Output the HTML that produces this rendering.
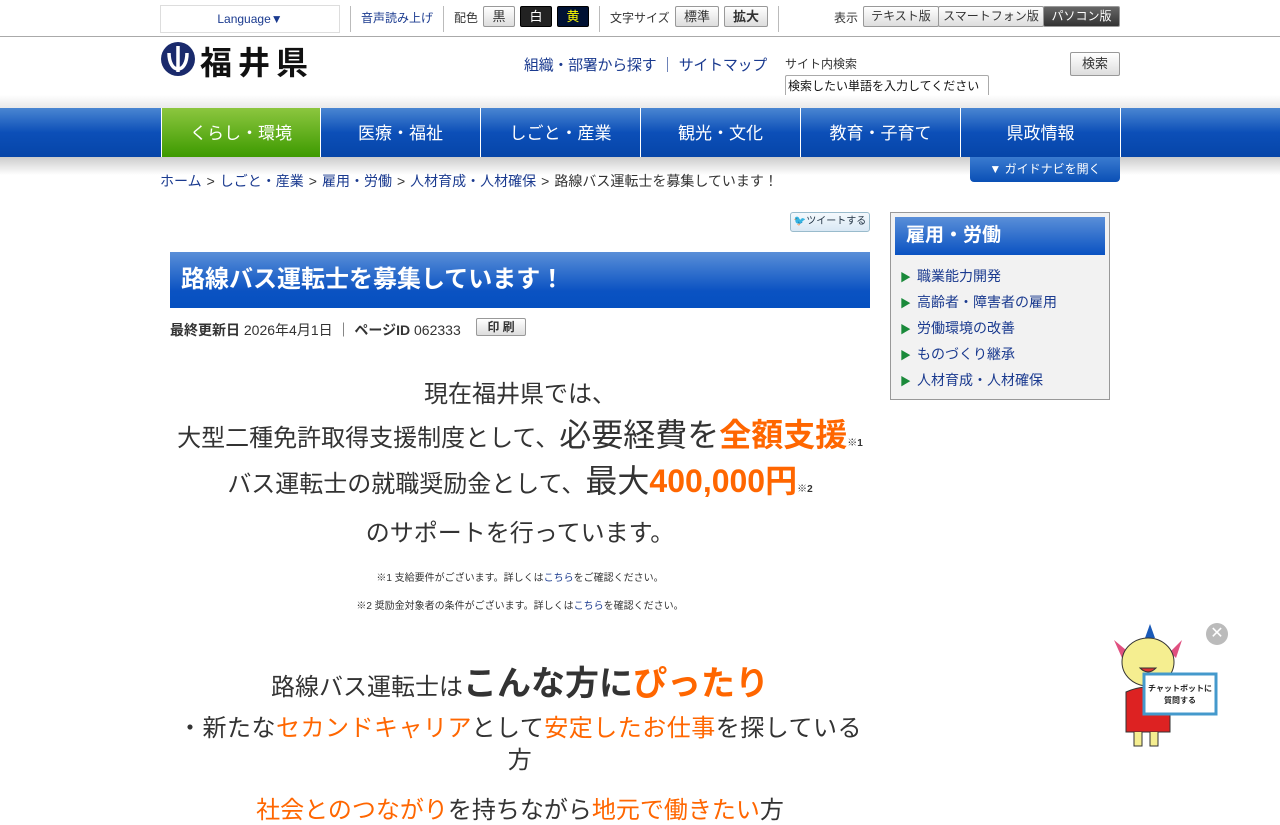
<!DOCTYPE html>
<html><head><meta charset="utf-8"><style>
*{margin:0;padding:0;box-sizing:border-box}
body{width:1280px;height:800px;overflow:hidden;background:#fff;font-family:"Liberation Sans","Noto Sans CJK JP",sans-serif;color:#333;position:relative}
.a{position:absolute}
.btn{position:absolute;border:1px solid #999;border-radius:2px;background:linear-gradient(#fff,#ddd);font-size:13px;text-align:center;line-height:19px;height:21px;color:#333}
.sep{position:absolute;top:6px;width:1px;height:26px;background:#bbb}
.nav{position:absolute;top:108px;height:49px;width:160px;color:#fff;font-size:17px;text-align:center;line-height:52px;border-right:1px solid #fff}
.c{position:absolute;left:170px;width:700px;text-align:center;white-space:nowrap}
.o{color:#f60}
.g{color:#333;margin:0 5px}
.side li{list-style:none;font-size:14px;color:#1a3a8f;height:26px;line-height:26px;padding-left:9px}
.side li:before{content:"▶";color:#1a8a3a;font-size:11px;margin-right:6px}
</style></head><body>
<div class="a" style="left:0;top:36px;width:1280px;height:1px;background:#aaa"></div>
<div class="a" style="left:160px;top:5px;width:180px;height:28px;border:1px solid #ddd;font-size:12px;color:#1a3a8f;text-align:center;line-height:26px">Language▼</div>
<div class="sep" style="left:350px"></div><div class="sep" style="left:443px"></div><div class="sep" style="left:599px"></div><div class="sep" style="left:778px"></div>
<div class="a" style="left:361px;top:9px;font-size:12px;color:#1a3a8f">音声読み上げ</div>
<div class="a" style="left:454px;top:9px;font-size:12px">配色</div>
<div class="btn" style="left:483px;top:6px;width:32px">黒</div>
<div class="btn" style="left:520px;top:6px;width:32px;background:#222;color:#fff;border-color:#000">白</div>
<div class="btn" style="left:557px;top:6px;width:32px;background:#013;color:#ff0;border-color:#000">黄</div>
<div class="a" style="left:610px;top:9px;font-size:12px">文字サイズ</div>
<div class="btn" style="left:675px;top:6px;width:44px">標準</div>
<div class="btn" style="left:724px;top:6px;width:44px;font-weight:bold">拡大</div>
<div class="a" style="left:834px;top:9px;font-size:12px">表示</div>
<div class="btn" style="left:863px;top:6px;width:76px;font-size:12px">テキスト版</div>
<div class="btn" style="left:938px;top:6px;width:106px;font-size:12px">スマートフォン版</div>
<div class="btn" style="left:1043px;top:6px;width:77px;font-size:12px;background:linear-gradient(#666,#333);color:#fff">パソコン版</div>
<svg class="a" style="left:160px;top:41px" width="36" height="36" viewBox="0 0 36 36"><circle cx="18" cy="18" r="17" fill="#1a2a6c"/><path d="M18 5v26M9 12c0 10 4 16 9 16s9-6 9-16" stroke="#fff" stroke-width="3.5" fill="none"/></svg>
<div class="a" style="left:200px;top:38px;font-size:32px;font-weight:bold;color:#111;letter-spacing:6px">福井県</div>
<div class="a" style="left:524px;top:54px;font-size:15px;color:#1a3a8f;letter-spacing:-0.3px">組織・部署から探す ｜ サイトマップ</div>
<div class="a" style="left:785px;top:55px;font-size:12px">サイト内検索</div>
<div class="a" style="left:785px;top:75px;width:204px;height:22px;border:1px solid #aaa;border-radius:2px;font-size:12px;line-height:20px;padding-left:2px;color:#111;white-space:nowrap;overflow:hidden">検索したい単語を入力してください</div>
<div class="btn" style="left:1070px;top:52px;width:50px;height:24px;line-height:22px;font-size:13px">検索</div>
<div class="a" style="left:0;top:95px;width:1280px;height:20px;background:linear-gradient(#fff,#ddd)"></div>
<div class="a" style="left:0;top:108px;width:1280px;height:49px;background:linear-gradient(#4a86d2,#0c4fb8 50%,#0645a8)"></div>
<div class="a" style="left:0;top:157px;width:1280px;height:18px;background:linear-gradient(#ccc,#fff)"></div>
<div class="nav" style="left:161px;background:linear-gradient(#8cc63f,#3d9a00);border-left:1px solid #fff">くらし・環境</div>
<div class="nav" style="left:321px">医療・福祉</div>
<div class="nav" style="left:481px">しごと・産業</div>
<div class="nav" style="left:641px">観光・文化</div>
<div class="nav" style="left:801px">教育・子育て</div>
<div class="nav" style="left:961px">県政情報</div>
<div class="a" style="left:970px;top:157px;width:150px;height:25px;background:linear-gradient(#3a7bd0,#0a4fb5);border-radius:0 0 4px 4px;color:#fff;font-size:12px;line-height:24px;text-align:center">▼ ガイドナビを開く</div>
<div class="a" style="left:160px;top:171px;font-size:14px;color:#1a3a8f;white-space:nowrap">ホーム<span class="g">&gt;</span>しごと・産業<span class="g">&gt;</span>雇用・労働<span class="g">&gt;</span>人材育成・人材確保<span class="g">&gt;</span><span style="color:#333">路線バス運転士を募集しています！</span></div>
<div class="a" style="left:790px;top:212px;width:80px;height:20px;border:1px solid #9bc;border-radius:3px;background:linear-gradient(#f4f9fd,#d9e8f4);font-size:10px;line-height:18px;text-align:center;color:#234"><span style="color:#39f">🐦</span>ツイートする</div>
<div class="a" style="left:170px;top:252px;width:700px;height:56px;background:linear-gradient(#5a8fd8,#0a52c2 70%,#0550c0);color:#fff;font-size:24px;font-weight:bold;line-height:56px;padding-left:11px">路線バス運転士を募集しています！</div>
<div class="a" style="left:170px;top:320px;font-size:14px"><b>最終更新日</b> 2026年4月1日 ｜ <b>ページID</b> 062333</div>
<div class="btn" style="left:476px;top:318px;width:50px;height:18px;line-height:16px;font-size:12px;font-weight:bold">印 刷</div>
<div class="c" style="top:374px;font-size:24px">現在福井県では、</div>
<div class="c" style="top:415px;font-size:24px;line-height:40px">大型二種免許取得支援制度として、<span style="font-size:32px">必要経費を</span><b class="o" style="font-size:32px">全額支援</b><b style="font-size:10px">※1</b></div>
<div class="c" style="top:461px;font-size:24px;line-height:40px">バス運転士の就職奨励金として、<span style="font-size:32px">最大</span><b class="o" style="font-size:32px">400,000円</b><b style="font-size:10px">※2</b></div>
<div class="c" style="top:513px;font-size:24px">のサポートを行っています。</div>
<div class="c" style="top:569px;font-size:10px">※1 支給要件がございます。詳しくは<span style="color:#1a3a8f">こちら</span>をご確認ください。</div>
<div class="c" style="top:597px;font-size:10px">※2 奨励金対象者の条件がございます。詳しくは<span style="color:#1a3a8f">こちら</span>を確認ください。</div>
<div class="c" style="top:662px;font-size:24px;line-height:44px">路線バス運転士は<b style="font-size:34px">こんな方に</b><b class="o" style="font-size:34px">ぴったり</b></div>
<div class="c" style="top:713px;font-size:24px;line-height:32px;letter-spacing:0.5px">・新たな<span class="o">セカンドキャリア</span>として<span class="o">安定したお仕事</span>を探している<br>方</div>
<div class="c" style="top:790px;font-size:24px"><span class="o">社会とのつながり</span>を持ちながら<span class="o">地元で働きたい</span>方</div>
<div class="a side" style="left:890px;top:212px;width:220px;height:188px;border:1px solid #999;background:#f2f2f2">
<div style="margin:4px;height:38px;background:linear-gradient(#5a8fd8,#0a52c2);color:#fff;font-size:19px;font-weight:bold;line-height:38px;padding-left:11px">雇用・労働</div>
<ul style="margin-top:8px"><li>職業能力開発</li><li>高齢者・障害者の雇用</li><li>労働環境の改善</li><li>ものづくり継承</li><li>人材育成・人材確保</li></ul></div>
<div class="a" style="left:1206px;top:623px;width:22px;height:22px;border-radius:50%;background:#bbb;color:#fff;font-size:16px;text-align:center;line-height:22px">✕</div>
<svg class="a" style="left:1110px;top:622px" width="110" height="130" viewBox="0 0 110 130">
<path d="M40 2l-5 14 10 0z" fill="#1a5ab8"/><path d="M4 18l12 10-4 8z M72 18l-12 12 6 6z" fill="#e05080"/>
<ellipse cx="38" cy="40" rx="26" ry="24" fill="#f5ee90" stroke="#333"/>
<path d="M30 46q8 8 16 0z" fill="#d33" stroke="#333"/>
<path d="M16 70q22-10 44 0v40H16z" fill="#d22" stroke="#333"/>
<path d="M24 110v14h8v-14M40 110v14h8v-14" fill="#f5ee90" stroke="#333"/>
<rect x="34" y="52" width="72" height="40" fill="#fff" stroke="#49c" stroke-width="3"/>
<text x="70" y="69" font-size="8" text-anchor="middle" font-weight="bold" fill="#222" font-family="Noto Sans CJK JP,sans-serif">チャットボットに</text>
<text x="70" y="81" font-size="8" text-anchor="middle" font-weight="bold" fill="#222" font-family="Noto Sans CJK JP,sans-serif">質問する</text>
</svg>
</body></html>
